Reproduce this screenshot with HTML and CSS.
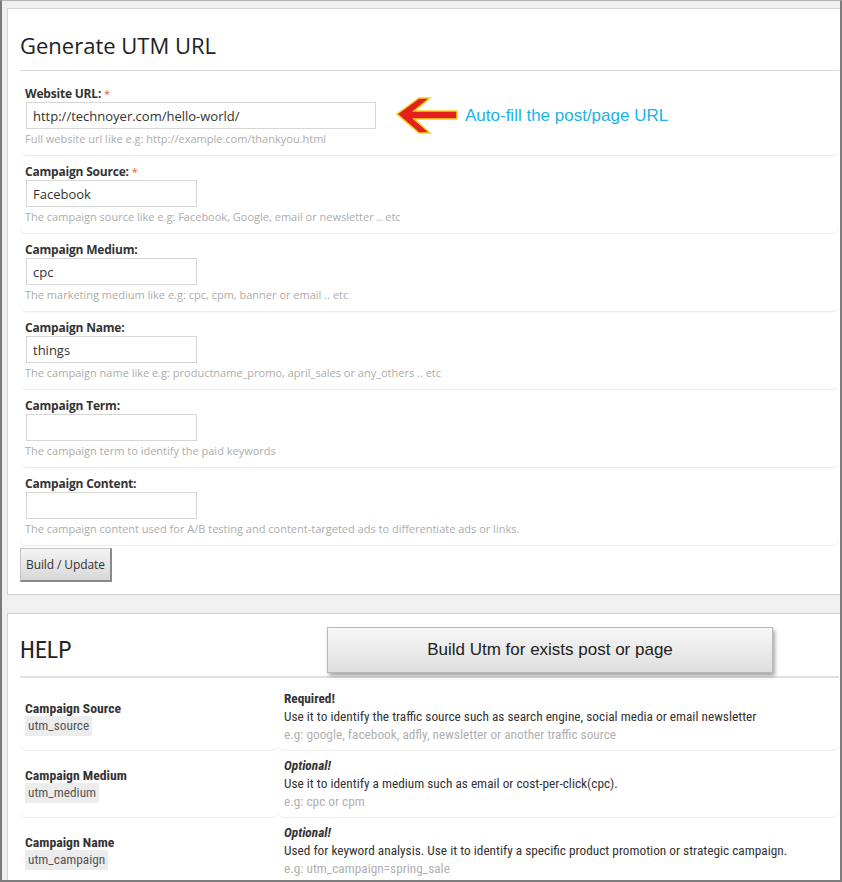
FILE: index.html
```html
<!DOCTYPE html>
<html>
<head>
<meta charset="utf-8">
<link rel="stylesheet" href="styles.css">
</head>
<body>
<div class="frame">
  <section class="panel panel-gen">
    <h2 class="title">Generate UTM URL</h2>
    <div class="fields">
      <div class="field">
        <label class="lbl">Website URL: <span class="req">*</span></label>
        <div class="input-line">
          <input class="inp wide" type="text" value="http://technoyer.com/hello-world/">
          <div class="note">
            <svg class="arrow" width="64" height="40" viewBox="0 0 64 40"><polygon points="2,18 24,2 35,2 19,15 62,15 62,23 19,23 35,37 24,37" fill="#e3201b" stroke="#f6d21a" stroke-width="1.5" stroke-linejoin="miter"/></svg>
            <span class="note-text">Auto-fill the post/page URL</span>
          </div>
        </div>
        <div class="hint">Full website url like e.g: http://example.com/thankyou.html</div>
      </div>
      <div class="field">
        <label class="lbl">Campaign Source: <span class="req">*</span></label>
        <input class="inp" type="text" value="Facebook">
        <div class="hint">The campaign source like e.g: Facebook, Google, email or newsletter .. etc</div>
      </div>
      <div class="field">
        <label class="lbl">Campaign Medium:</label>
        <input class="inp" type="text" value="cpc">
        <div class="hint">The marketing medium like e.g: cpc, cpm, banner or email .. etc</div>
      </div>
      <div class="field">
        <label class="lbl">Campaign Name:</label>
        <input class="inp" type="text" value="things">
        <div class="hint">The campaign name like e.g: productname_promo, april_sales or any_others .. etc</div>
      </div>
      <div class="field">
        <label class="lbl">Campaign Term:</label>
        <input class="inp" type="text" value="">
        <div class="hint">The campaign term to identify the paid keywords</div>
      </div>
      <div class="field">
        <label class="lbl">Campaign Content:</label>
        <input class="inp" type="text" value="">
        <div class="hint">The campaign content used for A/B testing and content-targeted ads to differentiate ads or links.</div>
      </div>
    </div>
    <button class="btn">Build / Update</button>
  </section>

  <section class="panel panel-help">
    <div class="help-head">
      <h2 class="help-title">HELP</h2>
      <button class="big-btn">Build Utm for exists post or page</button>
    </div>
    <div class="help-rows">
      <div class="hrow">
        <div class="hcell hleft">
          <div class="hname">Campaign Source</div>
          <code class="hcode">utm_source</code>
        </div>
        <div class="hcell hright">
          <div class="hstatus">Required!</div>
          <div class="hdesc">Use it to identify the traffic source such as search engine, social media or email newsletter</div>
          <div class="hex">e.g: google, facebook, adfly, newsletter or another traffic source</div>
        </div>
      </div>
      <div class="hrow">
        <div class="hcell hleft">
          <div class="hname">Campaign Medium</div>
          <code class="hcode">utm_medium</code>
        </div>
        <div class="hcell hright">
          <div class="hstatus opt">Optional!</div>
          <div class="hdesc">Use it to identify a medium such as email or cost-per-click(cpc).</div>
          <div class="hex">e.g: cpc or cpm</div>
        </div>
      </div>
      <div class="hrow">
        <div class="hcell hleft">
          <div class="hname">Campaign Name</div>
          <code class="hcode">utm_campaign</code>
        </div>
        <div class="hcell hright">
          <div class="hstatus opt">Optional!</div>
          <div class="hdesc">Used for keyword analysis. Use it to identify a specific product promotion or strategic campaign.</div>
          <div class="hex">e.g: utm_campaign=spring_sale</div>
        </div>
      </div>
    </div>
  </section>
</div>
</body>
</html>
```

FILE: styles.css
```css
* { box-sizing: border-box; }
html, body { margin: 0; padding: 0; background: #f0f0f0; }

.frame {
  width: 842px;
  height: 882px;
  overflow: hidden;
  background: #f0f0f0;
  border: 2px solid #7b7b7b;
  border-top: 1px solid #b5b5b5;
  padding: 7px 0 0 5px;
  font-family: "Open Sans", "Noto Sans", sans-serif;
  color: #333;
}

.panel {
  background: #fff;
  border: 1px solid #d2d2d2;
  margin-right: -20px;
  padding: 0 0 0 12px;
}

.panel-gen { padding-bottom: 12px; }

.title {
  margin: 0 20px 0 0;
  padding: 21px 0 10px 0;
  font-size: 22px;
  line-height: 30px;
  font-weight: 400;
  color: #222;
  border-bottom: 1px solid #dadada;
}

.fields { margin-top: 7px; margin-right: 20px; }

.field {
  height: 78px;
  padding: 7px 0 0 5px;
  border-bottom: 1px solid #ececec;
  border-radius: 0 0 7px 7px;
  box-shadow: 0 1px 1px rgba(0,0,0,0.02);
}

.lbl {
  display: block;
  font-size: 12px;
  line-height: 17px;
  font-weight: 700;
  color: #333;
  letter-spacing: -0.2px;
}
.req { color: #e0602f; font-weight: 400; font-size: 11px; }

.input-line { display: flex; align-items: center; height: 27px; }

.inp {
  display: block;
  margin: 0 0 0 1px;
  width: 171px;
  height: 27px;
  border: 1px solid #d6d6d6;
  padding: 0 6px;
  font-family: "Open Sans", "Noto Sans", sans-serif;
  font-size: 13px;
  color: #333;
  background: #fff;
  outline: none;
}
.inp.wide { width: 350px; }

.note { display: flex; align-items: center; margin: -6px 0 -7px 19px; }
.arrow { display: block; }
.note-text {
  margin-left: 6px;
  font-family: "Liberation Sans", Arial, sans-serif;
  font-size: 17px;
  color: #1bb2e8;
}

.hint {
  margin-top: 1px;
  font-size: 11px;
  line-height: 18px;
  color: #acacac;
}

.btn {
  display: block;
  margin-top: 2px;
  height: 34px;
  padding: 0 5px;
  font-family: "Open Sans", "Noto Sans", sans-serif;
  font-size: 12px;
  letter-spacing: -0.1px;
  color: #333;
  background: linear-gradient(#f4f4f4, #d8d8d8);
  border: 1px solid #c4c4c4;
  border-right: 2px solid #8a8a8a;
  border-bottom: 2px solid #8a8a8a;
}

.panel-help { margin-top: 18px; height: 300px; }

.help-head {
  display: grid;
  grid-template-columns: 307px 446px;
  align-items: center;
  margin-right: 20px;
  padding: 13px 0 3px 0;
  border-bottom: 2px solid #e2e2e2;
}
.help-title {
  margin: 0;
  font-family: "Liberation Sans Narrow", "Roboto Condensed", "Roboto", sans-serif;
  font-size: 24px;
  font-weight: 400;
  color: #222;
}
.big-btn {
  height: 46px;
  font-family: "Liberation Sans", Arial, sans-serif;
  font-size: 17px;
  color: #222;
  background: linear-gradient(#f7f7f7, #dedede);
  border: 1px solid #b9b9b9;
  box-shadow: 2px 3px 4px rgba(0,0,0,0.35);
}

.help-rows { margin-top: 6px; margin-right: 20px; font-family: "Liberation Sans Narrow", "Roboto Condensed", "Roboto", sans-serif; }
.hrow { display: grid; grid-template-columns: 258px 1fr; }
.hcell {
  height: 67px;
  border-bottom: 1px solid #ececec;
  border-radius: 0 0 7px 7px;
  display: flex;
  flex-direction: column;
  justify-content: center;
}
.hleft { padding-left: 5px; padding-top: 2px; }
.hright { padding-left: 6px; padding-bottom: 1px; }
.hname { font-size: 13.7px; font-weight: 700; line-height: 16px; color: #333; }
.hcode {
  align-self: flex-start;
  font-family: inherit;
  font-size: 13.3px;
  line-height: 20px;
  padding: 0 3px;
  background: #ececec;
  color: #555;
}
.hstatus { font-size: 13.3px; font-weight: 700; line-height: 18px; color: #333; }
.hstatus.opt { font-style: italic; }
.hdesc { font-size: 13.3px; line-height: 18px; color: #333; }
.hex { font-size: 13.3px; line-height: 18px; color: #b0b0b0; }
```
